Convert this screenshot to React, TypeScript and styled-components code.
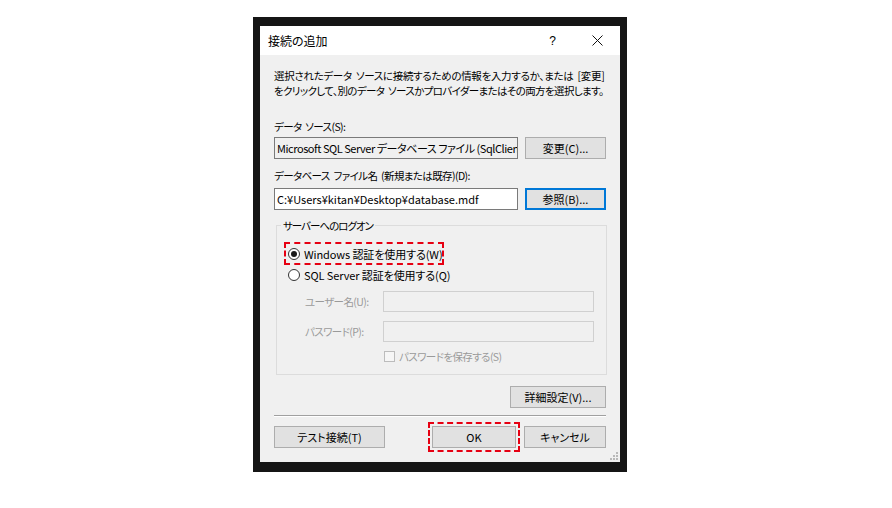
import React from 'react';
import styled, { createGlobalStyle, css } from 'styled-components';

const GlobalStyle = createGlobalStyle`
  html, body {
    margin: 0;
    padding: 0;
    background: #ffffff;
  }
  body {
    font-family: "Noto Sans CJK JP", "Noto Sans", sans-serif;
    font-feature-settings: "palt";
  }
`;

// kana in the original UI font are much narrower than in Noto
const narrow = css`
  font-size: 10.5px;
  letter-spacing: -0.6px;
`;

const Page = styled.div`
  width: 892px;
  height: 508px;
  padding: 17px 0 0 253px;
  box-sizing: border-box;
`;

const Frame = styled.div`
  width: 374px;
  background: #151515;
  padding: 9px 7px 10px 7px;
  box-sizing: border-box;
`;

const Dialog = styled.div`
  position: relative;
  width: 360px;
  background: #f0f0f0;
  color: #000;
  font-size: 11px;
`;

const TitleBar = styled.div`
  height: 29px;
  background: #ffffff;
  display: flex;
  align-items: center;
  padding-left: 8px;
`;

const Title = styled.div`
  flex: 1;
  font-size: 12px;
  color: #000;
`;

const TitleButton = styled.div`
  width: 45px;
  height: 29px;
  display: flex;
  align-items: center;
  justify-content: center;
  font-size: 12px;
  font-family: "Liberation Sans", sans-serif;
`;

const Body = styled.div`
  padding: 13px 14px 14px 14px;
  display: flex;
  flex-direction: column;
`;

const Description = styled.div`
  ${narrow};
  letter-spacing: -0.3px;
  word-spacing: 2px;
  line-height: 15px;
  white-space: nowrap;
`;

const DescLine = styled.div<{ $tight?: boolean }>`
  letter-spacing: ${(p) => (p.$tight ? '-0.62px' : '-0.3px')};
`;

const Label = styled.div<{ $top: number }>`
  ${narrow};
  word-spacing: 2px;
  margin-top: ${(p) => p.$top}px;
  line-height: 15px;
  white-space: nowrap;
`;

const Row = styled.div<{ $top: number }>`
  margin-top: ${(p) => p.$top}px;
  display: flex;
  gap: 7px;
  height: 22px;
`;

const TextBox = styled.div<{ $readOnly?: boolean }>`
  width: 244px;
  box-sizing: border-box;
  border: 1px solid #7a7a7a;
  background: ${(p) => (p.$readOnly ? '#f0f0f0' : '#ffffff')};
  padding: 0 2px;
  display: flex;
  align-items: center;
  white-space: nowrap;
  overflow: hidden;
  letter-spacing: ${(p) => (p.$readOnly ? '-0.45px' : '0')};
`;

const Button = styled.div<{ $w: number; $focused?: boolean; $marked?: boolean }>`
  width: ${(p) => p.$w}px;
  height: 22px;
  box-sizing: border-box;
  background: #e1e1e1;
  border: 1px solid ${(p) => (p.$focused ? '#0078d7' : '#adadad')};
  box-shadow: ${(p) => (p.$focused ? 'inset 0 0 0 1px #0078d7' : 'none')};
  outline: ${(p) => (p.$marked ? '2px dashed #e60012' : 'none')};
  outline-offset: 2px;
  display: flex;
  align-items: center;
  justify-content: center;
  white-space: nowrap;
  flex-shrink: 0;
`;

const Group = styled.fieldset`
  margin: 8px -1px 0 2px;
  padding: 0 12px 11px 8px;
  border: 1px solid #dcdcdc;
  min-width: 0;
`;

const Legend = styled.legend`
  font-size: 10.5px;
  letter-spacing: -1px;
  margin-left: -4px;
  padding: 0 2px;
  line-height: 15px;
`;

const RadioList = styled.div`
  margin-top: 10px;
  display: flex;
  flex-direction: column;
`;

const RadioRow = styled.div<{ $marked?: boolean }>`
  height: 21px;
  display: flex;
  align-items: center;
  gap: 4px;
  padding: 0 0 0 3px;
  align-self: flex-start;
  white-space: nowrap;
  letter-spacing: -0.1px;
  outline: ${(p) => (p.$marked ? '2px dashed #e60012' : 'none')};
  outline-offset: -1px;
`;

const RadioCircle = styled.span<{ $checked?: boolean }>`
  flex-shrink: 0;
  width: 12px;
  height: 12px;
  box-sizing: border-box;
  border: 1px solid #333;
  border-radius: 50%;
  background: #fff;
  display: flex;
  align-items: center;
  justify-content: center;

  &::after {
    content: '';
    display: ${(p) => (p.$checked ? 'block' : 'none')};
    width: 6px;
    height: 6px;
    border-radius: 50%;
    background: #1a1a1a;
  }
`;

const FieldGrid = styled.div`
  margin-top: 6px;
  display: grid;
  grid-template-columns: 78px 211px;
  row-gap: 9px;
  padding-left: 20px;
`;

const DisabledLabel = styled.div`
  ${narrow};
  color: #9a9a9a;
  display: flex;
  align-items: center;
  white-space: nowrap;
`;

const DisabledBox = styled.div`
  height: 21px;
  box-sizing: border-box;
  border: 1px solid #d0d0d0;
  background: #f0f0f0;
`;

const CheckRow = styled.div`
  ${narrow};
  margin: 7px 0 0 99px;
  display: flex;
  align-items: center;
  gap: 4px;
  color: #9a9a9a;
  height: 14px;
  white-space: nowrap;
`;

const CheckBox = styled.span`
  width: 11px;
  height: 11px;
  box-sizing: border-box;
  border: 1px solid #bcbcbc;
  background: #f6f6f6;
`;

const RightRow = styled.div`
  margin-top: 11px;
  display: flex;
  justify-content: flex-end;
`;

const Separator = styled.div`
  margin-top: 7px;
  border-top: 1px solid #a0a0a0;
  border-bottom: 1px solid #ffffff;
`;

const BottomRow = styled.div`
  margin-top: 9px;
  display: flex;
  align-items: center;
  gap: 8px;
`;

const Spacer = styled.div`
  flex: 1;
`;

const Grip = styled.svg`
  position: absolute;
  right: 2px;
  bottom: 2px;
`;

const App: React.FC = () => {
  return (
    <Page>
      <GlobalStyle />
      <Frame>
        <Dialog>
          <TitleBar>
            <Title>接続の追加</Title>
            <TitleButton>?</TitleButton>
            <TitleButton>
              <svg width="11" height="11" viewBox="0 0 11 11">
                <path d="M0.5 0.5 L10.5 10.5 M10.5 0.5 L0.5 10.5" stroke="#111" strokeWidth="1" />
              </svg>
            </TitleButton>
          </TitleBar>
          <Body>
            <Description>
              <DescLine>選択されたデータ ソースに接続するための情報を入力するか、または [変更]</DescLine>
              <DescLine $tight>をクリックして、別のデータ ソースかプロバイダーまたはその両方を選択します。</DescLine>
            </Description>
            <Label $top={21}>データ ソース(S):</Label>
            <Row $top={3}>
              <TextBox $readOnly>Microsoft SQL Server データベース ファイル (SqlClien</TextBox>
              <Button $w={81}>変更(C)...</Button>
            </Row>
            <Label $top={9}>データベース ファイル名 (新規または既存)(D):</Label>
            <Row $top={5}>
              <TextBox>C:¥Users¥kitan¥Desktop¥database.mdf</TextBox>
              <Button $w={81} $focused>参照(B)...</Button>
            </Row>
            <Group>
              <Legend>サーバーへのログオン</Legend>
              <RadioList>
                <RadioRow $marked>
                  <RadioCircle $checked />
                  Windows 認証を使用する(W)
                </RadioRow>
                <RadioRow>
                  <RadioCircle />
                  SQL Server 認証を使用する(Q)
                </RadioRow>
              </RadioList>
              <FieldGrid>
                <DisabledLabel>ユーザー名(U):</DisabledLabel>
                <DisabledBox />
                <DisabledLabel>パスワード(P):</DisabledLabel>
                <DisabledBox />
              </FieldGrid>
              <CheckRow>
                <CheckBox />
                パスワードを保存する(S)
              </CheckRow>
            </Group>
            <RightRow>
              <Button $w={96}>詳細設定(V)...</Button>
            </RightRow>
            <Separator />
            <BottomRow>
              <Button $w={111}>テスト接続(T)</Button>
              <Spacer />
              <Button $w={84} $marked>OK</Button>
              <Button $w={82}>キャンセル</Button>
            </BottomRow>
          </Body>
          <Grip width="8" height="8" viewBox="0 0 8 8">
            <rect x="6" y="0" width="2" height="2" fill="#b8b8b8" />
            <rect x="3" y="3" width="2" height="2" fill="#b8b8b8" />
            <rect x="6" y="3" width="2" height="2" fill="#b8b8b8" />
            <rect x="0" y="6" width="2" height="2" fill="#b8b8b8" />
            <rect x="3" y="6" width="2" height="2" fill="#b8b8b8" />
            <rect x="6" y="6" width="2" height="2" fill="#b8b8b8" />
          </Grip>
        </Dialog>
      </Frame>
    </Page>
  );
};

export default App;
